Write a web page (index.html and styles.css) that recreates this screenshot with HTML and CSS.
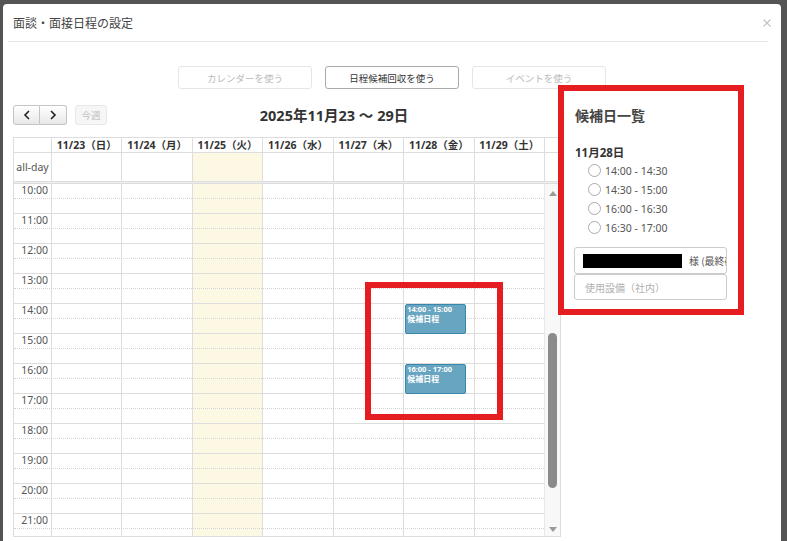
FILE: index.html
```html
<!DOCTYPE html>
<html lang="ja">
<head>
<meta charset="utf-8">
<title>面談・面接日程の設定</title>
<link rel="stylesheet" href="styles.css">
</head>
<body>
<div class="backdrop">
  <div class="modal">
    <div class="modal-header">
      <h4 class="modal-title">面談・面接日程の設定</h4>
      <span class="close"><svg width="8" height="8" viewBox="0 0 8 8"><path d="M0.5 0.5L7.5 7.5M7.5 0.5L0.5 7.5" stroke="#c4c4c4" stroke-width="1.2" fill="none"/></svg></span>
    </div>
    <div class="mode-buttons">
      <button class="mode-btn disabled">カレンダーを使う</button>
      <button class="mode-btn active">日程候補回収を使う</button>
      <button class="mode-btn disabled">イベントを使う</button>
    </div>
    <div class="main">
      <div class="calendar">
        <div class="toolbar">
          <div class="toolbar-left">
            <div class="btn-group">
              <button class="nav-btn"><svg width="8" height="10" viewBox="0 0 8 10"><path d="M6 1L2 5L6 9" stroke="#222" stroke-width="1.6" fill="none"/></svg></button>
              <button class="nav-btn"><svg width="8" height="10" viewBox="0 0 8 10"><path d="M2 1L6 5L2 9" stroke="#222" stroke-width="1.6" fill="none"/></svg></button>
            </div>
            <button class="today-btn">今週</button>
          </div>
          <h2 class="toolbar-title">2025年11月23 〜 29日</h2>
        </div>
        <div class="grid">
          <div class="head-row">
            <div class="axis"></div>
            <div class="day">11/23（日）</div>
            <div class="day">11/24（月）</div>
            <div class="day">11/25（火）</div>
            <div class="day">11/26（水）</div>
            <div class="day">11/27（木）</div>
            <div class="day">11/28（金）</div>
            <div class="day">11/29（土）</div>
            <div class="gutter"></div>
          </div>
          <div class="allday-row">
            <div class="axis">all-day</div>
            <div class="day"></div>
            <div class="day"></div>
            <div class="day today"></div>
            <div class="day"></div>
            <div class="day"></div>
            <div class="day"></div>
            <div class="day"></div>
            <div class="gutter"></div>
          </div>
          <div class="divider"></div>
          <div class="tg-body">
            <div class="tg-main">
              <div class="tg-bg">
                <div class="axis"></div>
                <div class="col"></div>
                <div class="col"></div>
                <div class="col today"></div>
                <div class="col"></div>
                <div class="col"></div>
                <div class="col"></div>
                <div class="col"></div>
              </div>
              <div class="tg-slats">
                <div class="slat"><span class="label">10:00</span></div>
                <div class="slat half"></div>
                <div class="slat"><span class="label">11:00</span></div>
                <div class="slat half"></div>
                <div class="slat"><span class="label">12:00</span></div>
                <div class="slat half"></div>
                <div class="slat"><span class="label">13:00</span></div>
                <div class="slat half"></div>
                <div class="slat"><span class="label">14:00</span></div>
                <div class="slat half"></div>
                <div class="slat"><span class="label">15:00</span></div>
                <div class="slat half"></div>
                <div class="slat"><span class="label">16:00</span></div>
                <div class="slat half"></div>
                <div class="slat"><span class="label">17:00</span></div>
                <div class="slat half"></div>
                <div class="slat"><span class="label">18:00</span></div>
                <div class="slat half"></div>
                <div class="slat"><span class="label">19:00</span></div>
                <div class="slat half"></div>
                <div class="slat"><span class="label">20:00</span></div>
                <div class="slat half"></div>
                <div class="slat"><span class="label">21:00</span></div>
                <div class="slat half"></div>
              </div>
              <div class="tg-content">
                <div class="axis"></div>
                <div class="col"></div>
                <div class="col"></div>
                <div class="col"></div>
                <div class="col"></div>
                <div class="col"></div>
                <div class="col">
                  <div class="event" style="top:120px;height:30px;">
                    <div class="event-time">14:00 - 15:00</div>
                    <div class="event-title">候補日程</div>
                  </div>
                  <div class="event" style="top:180px;height:30px;">
                    <div class="event-time">16:00 - 17:00</div>
                    <div class="event-title">候補日程</div>
                  </div>
                </div>
                <div class="col"></div>
              </div>
            </div>
            <div class="scrollbar">
              <span class="sb-up"></span>
              <span class="sb-thumb"></span>
              <span class="sb-down"></span>
            </div>
          </div>
        </div>
      </div>
      <div class="side">
        <h3 class="side-title">候補日一覧</h3>
        <div class="side-date">11月28日</div>
        <ul class="slot-list">
          <li class="slot"><span class="radio"></span>14:00 - 14:30</li>
          <li class="slot"><span class="radio"></span>14:30 - 15:00</li>
          <li class="slot"><span class="radio"></span>16:00 - 16:30</li>
          <li class="slot"><span class="radio"></span>16:30 - 17:00</li>
        </ul>
        <div class="field name-field"><span class="redact"></span><span class="name-suffix">様 (最終確認者)</span></div>
        <div class="field placeholder">使用設備（社内）</div>
      </div>
    </div>
    <div class="annot annot-side"></div>
    <div class="annot annot-events"></div>
  </div>
</div>
</body>
</html>
```

FILE: styles.css
```css
* { box-sizing: border-box; }
html, body { margin: 0; padding: 0; }
body {
  width: 787px;
  height: 541px;
  overflow: hidden;
  background: #545454;
  font-family: "Noto Sans", "Noto Sans CJK JP", sans-serif;
  color: #333;
}
button { font-family: inherit; margin: 0; }

.backdrop { padding: 4px 6px 0 3px; height: 541px; }
.modal {
  position: relative;
  background: #fff;
  height: 537px;
  border-radius: 4px 4px 0 0;
}

.modal-header {
  margin: 0 13px 0 5px;
  height: 38px;
  border-bottom: 1px solid #e3e3e3;
  display: flex;
  align-items: center;
  justify-content: space-between;
  padding-left: 5px;
}
.modal-title {
  margin: 0;
  font-family: "Noto Sans CJK JP", sans-serif;
  font-weight: 400;
  font-size: 12px;
  color: #444;
  line-height: 16px;
}
.close { display: flex; margin-right: -3px; margin-top: 1px; }

.mode-buttons {
  display: flex;
  justify-content: center;
  gap: 13px;
  margin-top: 24px;
}
.mode-btn {
  width: 134px;
  height: 23px;
  background: #fff;
  border-radius: 3px;
  font-family: "Noto Sans CJK JP", sans-serif;
  font-size: 9.5px;
  padding: 0;
}
.mode-btn.disabled { border: 1px solid #e6e6e6; color: #bbb; }
.mode-btn.active { border: 1px solid #aaa; color: #333; }

.main {
  display: flex;
  align-items: flex-start;
  padding-left: 10px;
  margin-top: 16px;
}

.calendar { width: 548px; flex: none; }
.toolbar { display: flex; align-items: center; height: 20px; margin-bottom: 12px; }
.toolbar-left { display: flex; gap: 8px; }
.btn-group { display: flex; }
.nav-btn {
  width: 27px;
  height: 20px;
  border: 1px solid #c4c4c4;
  background: linear-gradient(#ffffff, #e8e8e8);
  display: flex;
  align-items: center;
  justify-content: center;
  padding: 0;
}
.nav-btn:first-child { border-radius: 3px 0 0 3px; }
.nav-btn:last-child { border-radius: 0 3px 3px 0; border-left: 0; }
.today-btn {
  width: 32px;
  height: 20px;
  border: 1px solid #e8e8e8;
  background: #f6f6f6;
  border-radius: 3px;
  color: #c0c0c0;
  font-family: "Noto Sans CJK JP", sans-serif;
  font-size: 9.5px;
  padding: 0;
}
.toolbar-title {
  flex: 1;
  margin: 0;
  text-align: center;
  font-size: 14.5px;
  font-weight: 700;
  color: #333;
  line-height: 20px;
}

.grid { border: 1px solid #ddd; }
.head-row, .allday-row {
  display: grid;
  grid-template-columns: 37px repeat(7, 1fr) 16px;
}
.head-row { height: 15px; border-bottom: 1px solid #ddd; }
.head-row .day, .head-row .gutter,
.allday-row .day, .allday-row .gutter { border-left: 1px solid #ddd; }
.head-row .day {
  text-align: center;
  font-size: 10.5px;
  font-weight: 700;
  line-height: 14px;
  color: #333;
  white-space: nowrap;
}
.allday-row { height: 28px; }
.allday-row .axis {
  font-size: 10.5px;
  color: #555;
  text-align: center;
  line-height: 28px;
}
.day.today, .col.today { background: #fcf8e3; }
.divider { height: 3px; border-top: 1px solid #ddd; border-bottom: 1px solid #ddd; background: #eee; }

.tg-body { display: flex; height: 352px; overflow: hidden; }
.tg-main { flex: 1; display: grid; align-items: start; }
.tg-main > * { grid-area: 1 / 1; }
.tg-bg, .tg-content {
  display: grid;
  grid-template-columns: 37px repeat(7, 1fr);
  height: 359px;
}
.tg-bg .col { border-left: 1px solid #ddd; }
.tg-content .col { position: relative; }
.slat { height: 15px; border-top: 1px solid #ddd; display: flex; }
.slat:first-child { border-top: 0; height: 14px; }
.slat.half { border-top: 1px dotted #d4d4d4; }
.label {
  width: 37px;
  text-align: right;
  padding-right: 3px;
  font-size: 10.5px;
  line-height: 13px;
  color: #555;
}
.event {
  position: absolute;
  left: 2px;
  right: 8px;
  background: #68a5c1;
  border: 1px solid #3a87ad;
  border-radius: 2px;
  color: #fff;
  padding: 0 1px;
  overflow: hidden;
}
.event-time { font-size: 7.5px; line-height: 9px; font-weight: 700; white-space: nowrap; }
.event-title { font-family: "Noto Sans CJK JP", sans-serif; font-size: 8px; line-height: 10px; font-weight: 700; }

.scrollbar {
  width: 16px;
  flex: none;
  border-left: 1px solid #e8e8e8;
  background: #f8f8f8;
  display: flex;
  flex-direction: column;
  align-items: center;
}
.sb-up { margin-top: 7px; width: 0; height: 0; border-left: 4px solid transparent; border-right: 4px solid transparent; border-bottom: 5px solid #9a9a9a; }
.sb-thumb { margin-top: 137px; width: 9px; height: 155px; border-radius: 5px; background: #8b8b8b; }
.sb-down { margin-top: 39px; width: 0; height: 0; border-left: 4px solid transparent; border-right: 4px solid transparent; border-top: 5px solid #9a9a9a; }

.side { width: 153px; margin-left: 13px; font-family: "Noto Sans", "Noto Sans CJK JP", sans-serif; }
.side-title { margin: 0; font-family: "Noto Sans CJK JP", sans-serif; font-size: 14px; font-weight: 700; line-height: 20px; color: #444; padding-left: 1px; }
.side-date { margin-top: 20px; font-size: 11.5px; font-weight: 700; line-height: 16px; color: #333; padding-left: 1px; }
.slot-list { list-style: none; margin: 0; padding: 0 0 0 14px; }
.slot { display: flex; align-items: center; height: 19px; font-size: 10.5px; color: #555; }
.radio { width: 13px; height: 13px; border: 1px solid #aaa; border-radius: 50%; margin-right: 4px; flex: none; }
.field {
  height: 26px;
  border: 1px solid #ccc;
  border-radius: 3px;
  display: flex;
  align-items: center;
  padding-left: 8px;
  overflow: hidden;
  white-space: nowrap;
  font-size: 10px;
}
.name-field { margin-top: 10px; height: 27px; }
.redact { width: 99px; height: 14px; background: #000; flex: none; }
.name-suffix { margin-left: 7px; color: #555; font-family: "Noto Sans CJK JP", sans-serif; }
.placeholder { color: #b0b0b0; padding-left: 10px; font-family: "Noto Sans CJK JP", sans-serif; }

.annot { position: absolute; border: 6px solid #e51c20; pointer-events: none; }
.annot-side { left: 555px; top: 81px; width: 186px; height: 230px; }
.annot-events { left: 362px; top: 278px; width: 138px; height: 138px; }
```
